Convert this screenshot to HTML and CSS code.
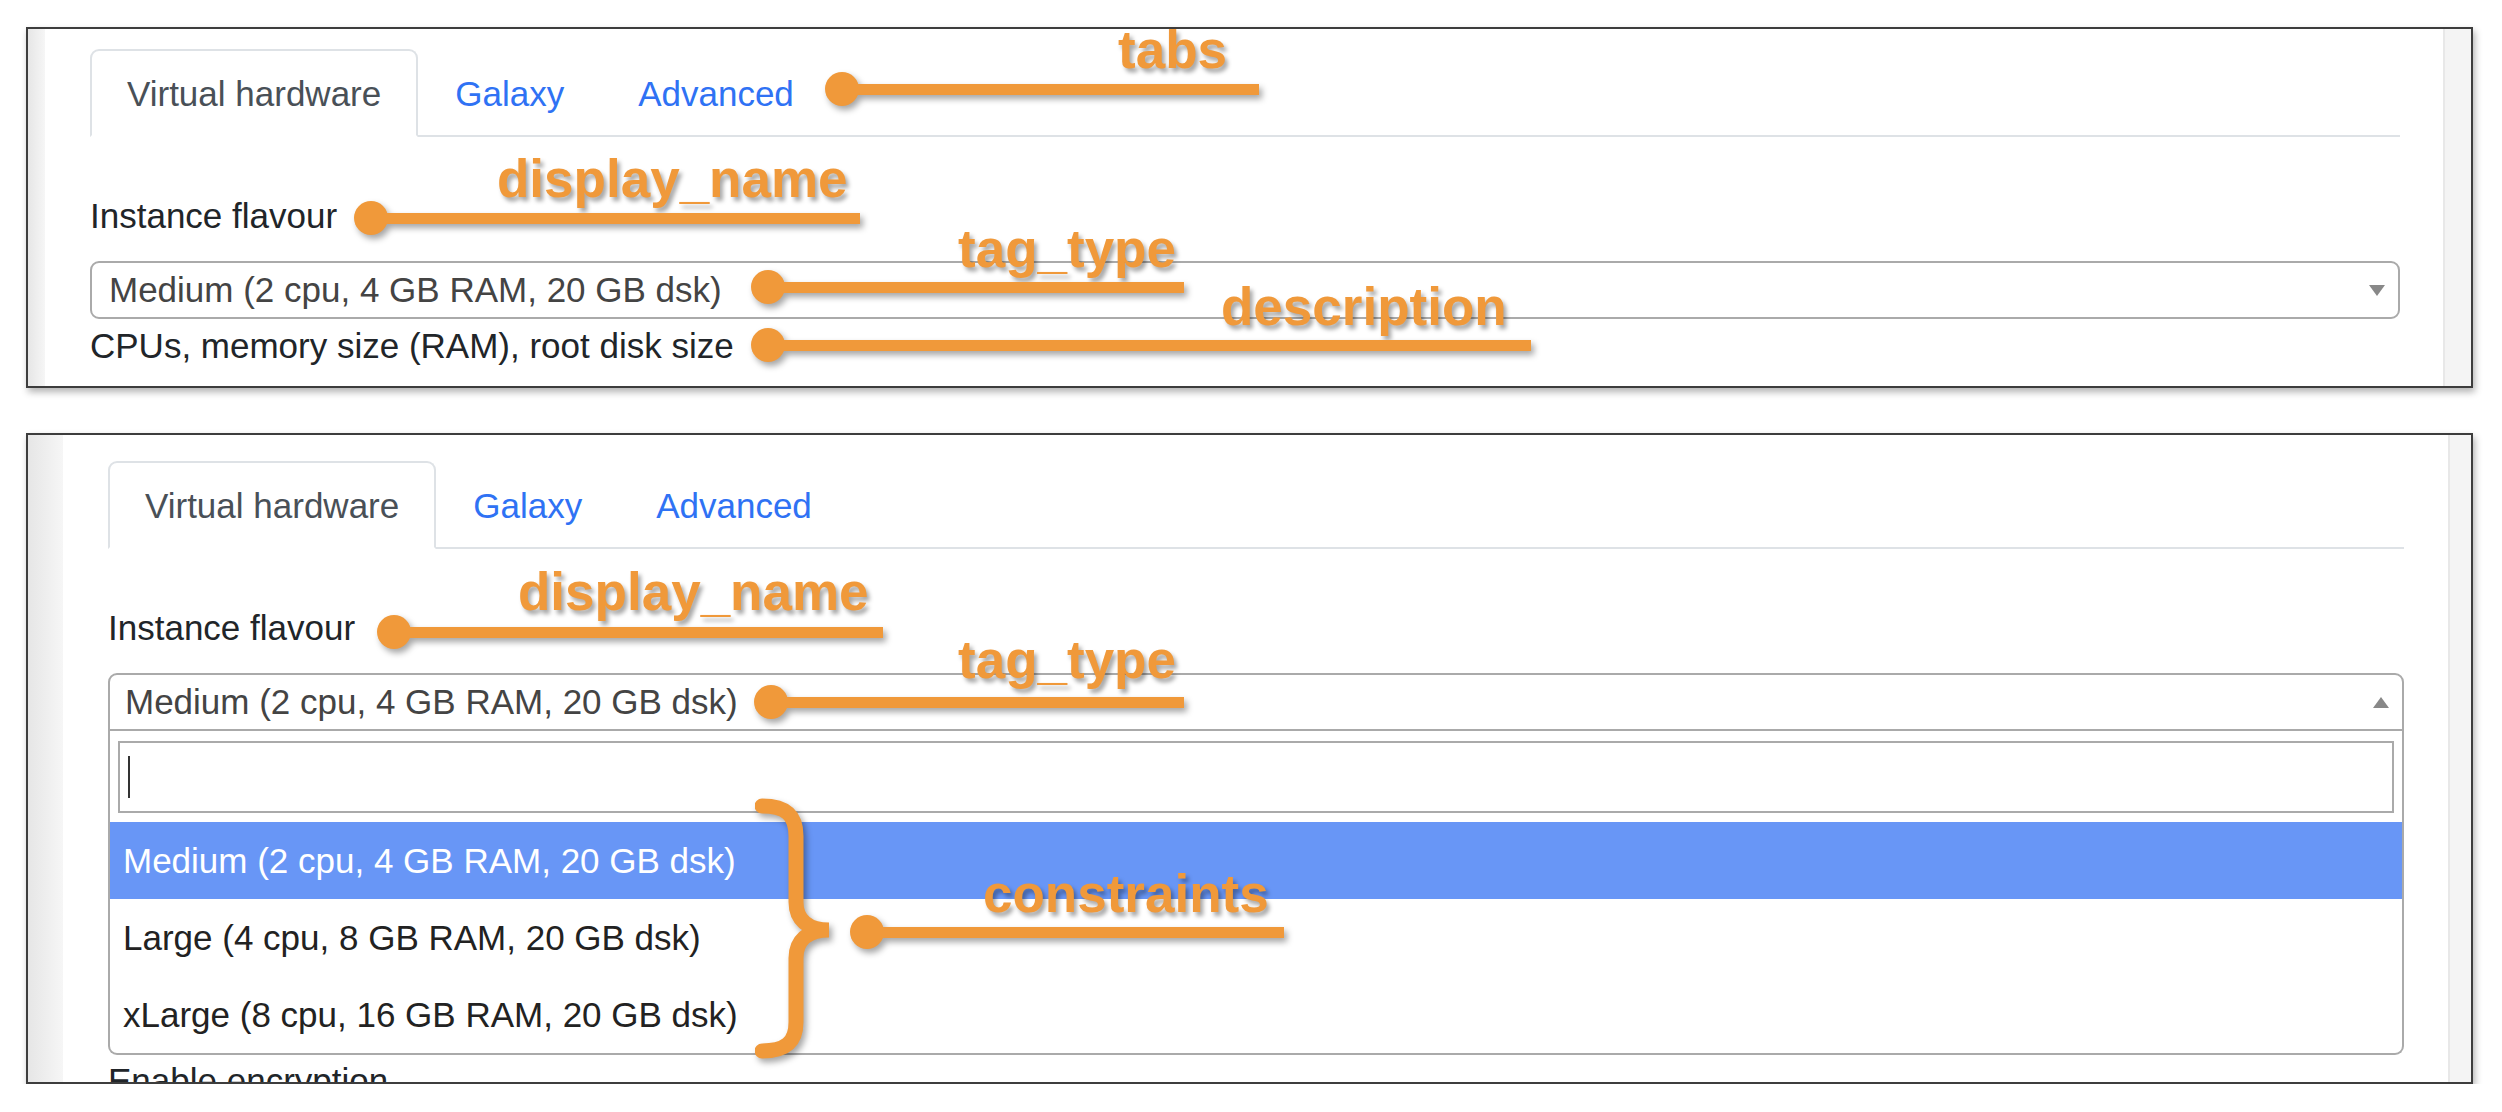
FILE: index.html
```html
<!DOCTYPE html>
<html lang="en">
<head>
    <meta charset="UTF-8">
    <title>Flavour form annotations</title>
    <link rel="stylesheet" href="styles.css">
</head>
<body>
    <div class="board">
        <!-- closed select -->
        <section class="shot shot-top">
            <div class="gutter"></div>
            <div class="page">
                <nav class="tabs">
                    <a class="tab active">Virtual hardware</a>
                    <a class="tab">Galaxy</a>
                    <a class="tab">Advanced</a>
                </nav>
                <div class="field">
                    <label class="field-label">Instance flavour</label>
                    <div class="select">
                        <span>Medium (2 cpu, 4 GB RAM, 20 GB dsk)</span>
                        <span class="arrow"></span>
                    </div>
                    <div class="field-help">CPUs, memory size (RAM), root disk size</div>
                </div>
            </div>
            <div class="scrollbar"></div>
        </section>

        <!-- open select -->
        <section class="shot shot-bottom">
            <div class="gutter"></div>
            <div class="page">
                <nav class="tabs">
                    <a class="tab active">Virtual hardware</a>
                    <a class="tab">Galaxy</a>
                    <a class="tab">Advanced</a>
                </nav>
                <div class="field">
                    <label class="field-label">Instance flavour</label>
                    <div class="select open">
                        <span>Medium (2 cpu, 4 GB RAM, 20 GB dsk)</span>
                        <span class="arrow"></span>
                    </div>
                    <div class="dropdown">
                        <div class="search-wrap">
                            <div class="search"><span class="caret"></span></div>
                        </div>
                        <ul class="options">
                            <li class="option highlighted">Medium (2 cpu, 4 GB RAM, 20 GB dsk)</li>
                            <li class="option">Large (4 cpu, 8 GB RAM, 20 GB dsk)</li>
                            <li class="option">xLarge (8 cpu, 16 GB RAM, 20 GB dsk)</li>
                        </ul>
                    </div>
                    <label class="field-label">Enable encryption</label>
                </div>
            </div>
            <div class="scrollbar"></div>
        </section>

        <!-- annotations -->
        <div class="note" style="left:1118px; top:23px">tabs</div>
        <div class="pointer" style="left:825px; top:72px; width:434px"></div>
        <div class="note" style="left:497px; top:152px">display_name</div>
        <div class="pointer" style="left:354px; top:201px; width:506px"></div>
        <div class="note" style="left:958px; top:222px">tag_type</div>
        <div class="pointer" style="left:751px; top:270px; width:433px"></div>
        <div class="note" style="left:1221px; top:280px">description</div>
        <div class="pointer" style="left:751px; top:328px; width:780px"></div>

        <div class="note" style="left:518px; top:565px">display_name</div>
        <div class="pointer" style="left:377px; top:615px; width:506px"></div>
        <div class="note" style="left:958px; top:633px">tag_type</div>
        <div class="pointer" style="left:754px; top:685px; width:430px"></div>
        <svg class="brace" width="84" height="266" viewBox="0 0 84 266">
            <path d="M7 10 C 30 10, 41 18, 41 40 L 41 106 C 41 123, 52 134, 74 134 C 52 134, 41 145, 41 162 L 41 226 C 41 247, 30 255, 7 255"/>
        </svg>
        <div class="note" style="left:983px; top:867px">constraints</div>
        <div class="pointer" style="left:850px; top:915px; width:434px"></div>
    </div>
</body>
</html>
```

FILE: styles.css
```css
* {
    box-sizing: border-box;
}
body {
    margin: 0;
    background: #fff;
    font-family: "Liberation Sans", Arial, sans-serif;
    font-size: 35px;
    line-height: 52px;
    color: #212529;
}
.board {
    position: relative;
    padding: 27px 0 0 26px;
    display: flex;
    flex-direction: column;
    gap: 45px;
}
.shot {
    width: 2447px;
    display: flex;
    border: 2px solid #3d3d3d;
    background: #fff;
    overflow: hidden;
    box-shadow: 2px 4px 7px rgba(0,0,0,0.3);
}
.shot-top {
    height: 361px;
}
.shot-bottom {
    height: 651px;
}
.gutter {
    width: 17px;
    flex-shrink: 0;
    background: linear-gradient(to right, #e6e6e6, #f6f6f6);
}
.shot-bottom .gutter {
    width: 35px;
}
.scrollbar {
    width: 28px;
    flex-shrink: 0;
    background: #f4f4f4;
    border-left: 2px solid #e8e8e8;
}
.shot-bottom .scrollbar {
    width: 23px;
}
.page {
    flex: 1;
    padding: 20px 43px 0 45px;
}
.shot-bottom .page {
    padding: 26px 44px 0 45px;
}

/* tabs */
.tabs {
    display: flex;
    border-bottom: 2px solid #dee2e6;
}
.tab {
    padding: 17px 35px 15px;
    border: 2px solid transparent;
    border-radius: 9px 9px 0 0;
    margin-bottom: -2px;
    color: #2f72f4;
}
.tab.active {
    color: #495057;
    background: #fff;
    border-color: #dee2e6 #dee2e6 #fff;
}

/* form field */
.field {
    margin-top: 53px;
}
.field-label {
    display: block;
    margin-bottom: 19px;
}
.select {
    height: 58px;
    display: flex;
    align-items: center;
    justify-content: space-between;
    padding: 0 13px 0 17px;
    border: 2px solid #aaa;
    border-radius: 9px;
    color: #444;
    line-height: 54px;
}
.arrow {
    width: 0;
    height: 0;
    border-style: solid;
    border-width: 11px 8px 0;
    border-color: #888 transparent transparent;
}
.select.open {
    border-radius: 9px 9px 0 0;
    padding-left: 15px;
}
.select.open .arrow {
    border-width: 0 8px 11px;
    border-color: transparent transparent #888;
}
.field-help {
    margin-top: 1px;
}

/* open dropdown */
.dropdown {
    border: 2px solid #aaa;
    border-top: none;
    border-radius: 0 0 9px 9px;
    margin-bottom: 0;
}
.search-wrap {
    padding: 10px 8px 9px;
}
.search {
    height: 72px;
    border: 2px solid #aaa;
    display: flex;
    align-items: center;
    padding-left: 8px;
}
.caret {
    width: 2px;
    height: 42px;
    background: #333;
}
.options {
    list-style: none;
    margin: 0;
    padding: 0;
}
.option {
    height: 77px;
    line-height: 77px;
    padding: 0 13px;
    color: #222;
}
.option.highlighted {
    background: #6896f6;
    color: #fff;
}
.dropdown + .field-label {
    margin-top: 0;
}

/* annotations */
.note {
    position: absolute;
    font-size: 53px;
    line-height: 1;
    font-weight: bold;
    color: #f0993a;
    text-shadow: 3px 4px 4px rgba(0,0,0,0.35);
    white-space: nowrap;
}
.pointer {
    position: absolute;
    height: 34px;
    filter: drop-shadow(3px 4px 3px rgba(0,0,0,0.35));
}
.pointer::before {
    content: "";
    position: absolute;
    left: 0;
    top: 0;
    width: 34px;
    height: 34px;
    border-radius: 50%;
    background: #f0993a;
}
.pointer::after {
    content: "";
    position: absolute;
    left: 17px;
    right: 0;
    top: 12px;
    height: 11px;
    background: #f0993a;
}
.brace {
    position: absolute;
    left: 755px;
    top: 796px;
    filter: drop-shadow(3px 4px 3px rgba(0,0,0,0.35));
}
.brace path {
    fill: none;
    stroke: #f0993a;
    stroke-width: 15;
    stroke-linecap: round;
}
```
